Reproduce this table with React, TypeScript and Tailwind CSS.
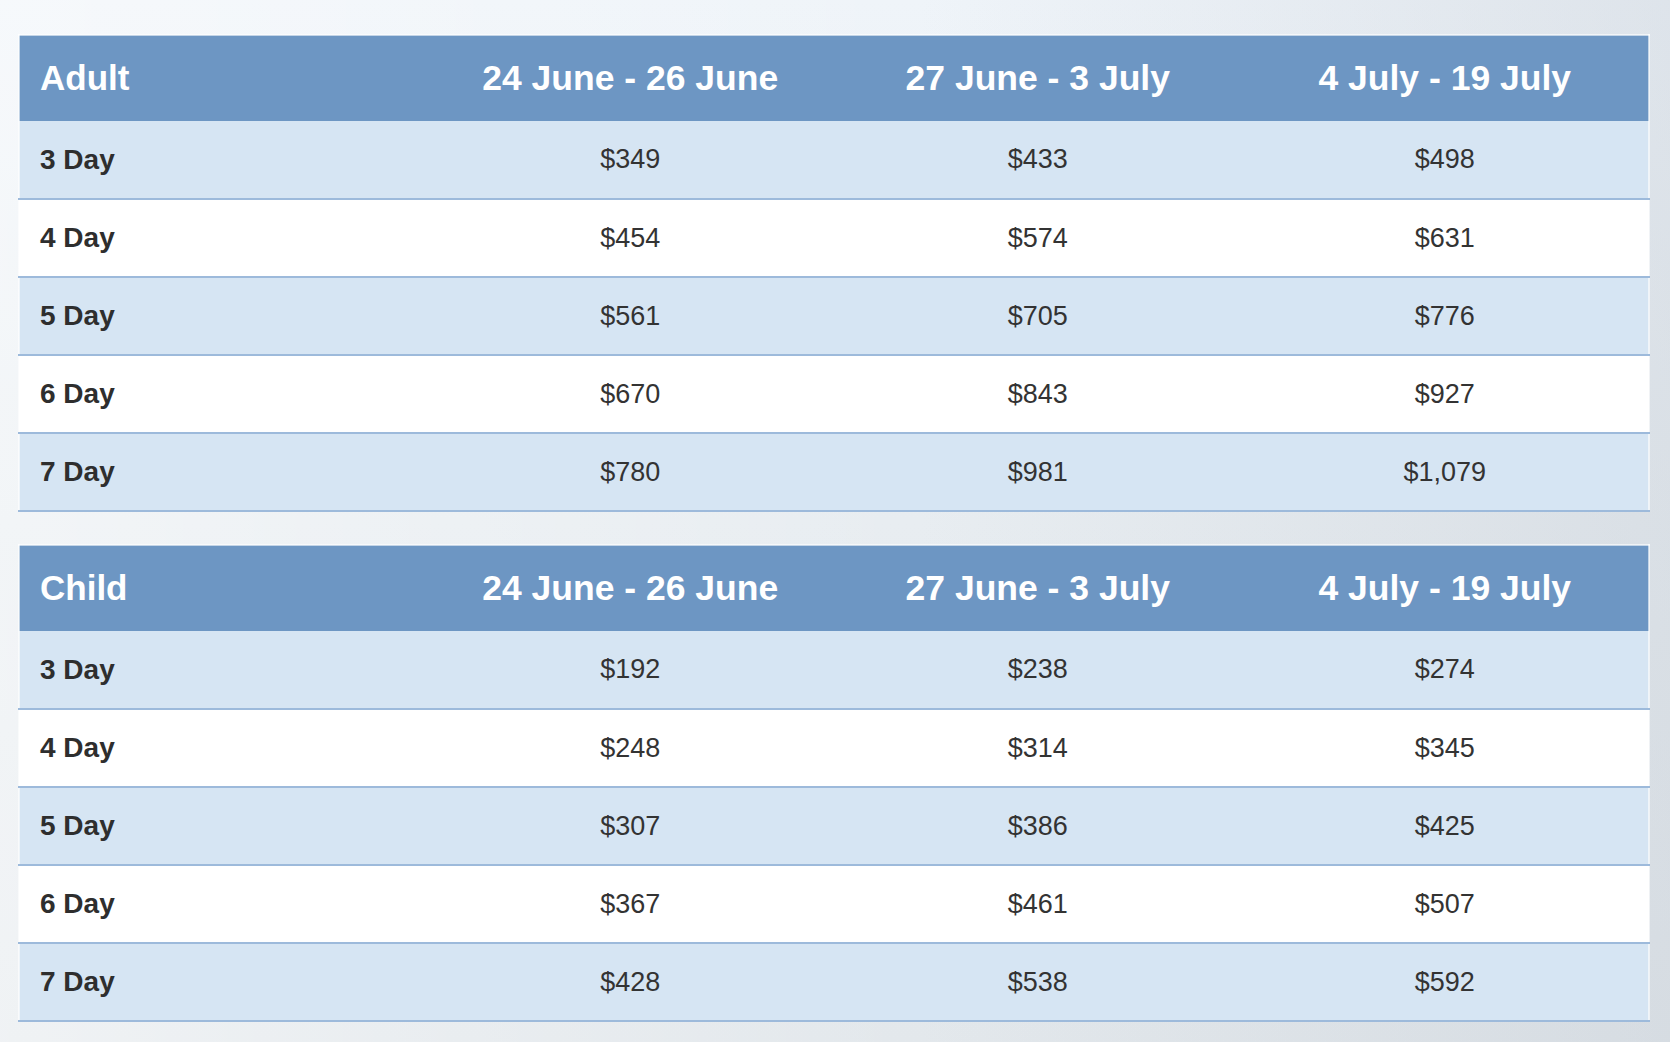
const periods = ['24 June - 26 June', '27 June - 3 July', '4 July - 19 July'];

const adult = [
  ['3 Day', '$349', '$433', '$498'],
  ['4 Day', '$454', '$574', '$631'],
  ['5 Day', '$561', '$705', '$776'],
  ['6 Day', '$670', '$843', '$927'],
  ['7 Day', '$780', '$981', '$1,079'],
];

const child = [
  ['3 Day', '$192', '$238', '$274'],
  ['4 Day', '$248', '$314', '$345'],
  ['5 Day', '$307', '$386', '$425'],
  ['6 Day', '$367', '$461', '$507'],
  ['7 Day', '$428', '$538', '$592'],
];

function PriceTable({ title, rows }: { title: string; rows: string[][] }) {
  return (
    <table className="w-full table-fixed border-collapse border-2 border-white/60">
      <thead>
        <tr className="h-[86px] bg-[#6d96c3] text-white">
          <th className="pl-5 text-left text-[35px] font-bold">{title}</th>
          {periods.map((p) => (
            <th key={p} className="text-center text-[35.5px] font-bold">
              {p}
            </th>
          ))}
        </tr>
      </thead>
      <tbody>
        {rows.map((r, i) => (
          <tr key={r[0]} className={`h-[78px] border-b-2 border-[#9dbadb] ${i % 2 === 0 ? 'bg-[#d6e5f3]' : 'bg-white'}`}>
            <td className="pl-5 text-[28px] font-bold text-[#2e2e2e]">{r[0]}</td>
            {r.slice(1).map((price, j) => (
              <td key={j} className="text-center text-[27px] text-[#333333]">
                {price}
              </td>
            ))}
          </tr>
        ))}
      </tbody>
    </table>
  );
}

export default function App() {
  return (
    <div
      className="min-h-screen bg-[linear-gradient(90deg,rgba(255,255,255,0.45)_0%,rgba(255,255,255,0)_55%,rgba(190,198,208,0.35)_100%),linear-gradient(180deg,#eff4f9_0%,#e8edf1_50%,#e3e8ec_100%)] pt-[34px] pb-5 pl-[18px] pr-5 font-['Liberation_Sans',Arial,sans-serif]"
    >
      <div className="mb-8">
        <PriceTable title="Adult" rows={adult} />
      </div>
      <PriceTable title="Child" rows={child} />
    </div>
  );
}
